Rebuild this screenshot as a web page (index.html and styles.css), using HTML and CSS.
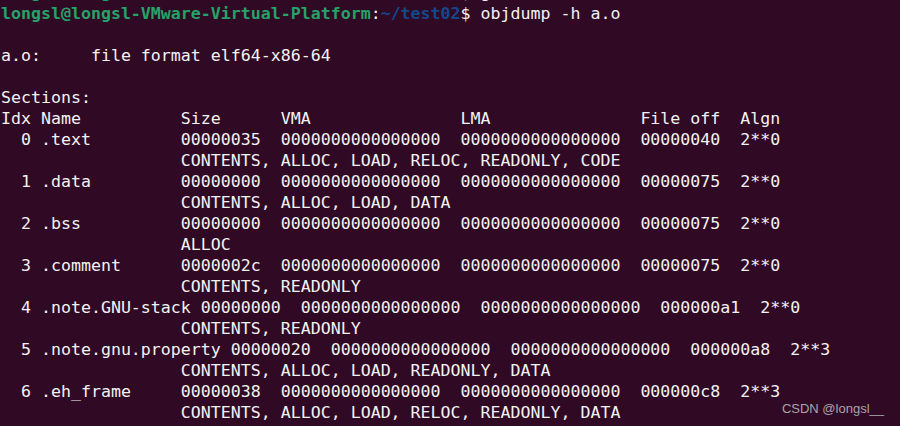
FILE: index.html
```html
<!DOCTYPE html>
<html lang="en">
<head>
<meta charset="utf-8">
<title>objdump -h a.o</title>
<link rel="stylesheet" href="styles.css">
</head>
<body>
<main class="term">
<pre class="out"><span class="user">longsl@longsl-VMware-Virtual-Platform</span>:<span class="path">~/test02</span>$ gcc -c a.c
<span class="user">longsl@longsl-VMware-Virtual-Platform</span>:<span class="path">~/test02</span>$ objdump -h a.o

a.o:     file format elf64-x86-64

Sections:
Idx Name          Size      VMA               LMA               File off  Algn
  0 .text         00000035  0000000000000000  0000000000000000  00000040  2**0
                  CONTENTS, ALLOC, LOAD, RELOC, READONLY, CODE
  1 .data         00000000  0000000000000000  0000000000000000  00000075  2**0
                  CONTENTS, ALLOC, LOAD, DATA
  2 .bss          00000000  0000000000000000  0000000000000000  00000075  2**0
                  ALLOC
  3 .comment      0000002c  0000000000000000  0000000000000000  00000075  2**0
                  CONTENTS, READONLY
  4 .note.GNU-stack 00000000  0000000000000000  0000000000000000  000000a1  2**0
                  CONTENTS, READONLY
  5 .note.gnu.property 00000020  0000000000000000  0000000000000000  000000a8  2**3
                  CONTENTS, ALLOC, LOAD, READONLY, DATA
  6 .eh_frame     00000038  0000000000000000  0000000000000000  000000c8  2**3
                  CONTENTS, ALLOC, LOAD, RELOC, READONLY, DATA
</pre>
<div class="mark">CSDN @longsl__</div>
</main>
</body>
</html>
```

FILE: styles.css
```css
html, body {
  margin: 0;
  padding: 0;
  width: 900px;
  height: 426px;
  overflow: hidden;
  background: #300a24;
}
.term {
  position: relative;
  width: 900px;
  height: 426px;
  overflow: hidden;
  background: #300a24;
}
.out {
  margin: -18px 0 0 0;
  padding: 0 0 0 1px;
  font-family: "DejaVu Sans Mono", monospace;
  font-size: 16.6px;
  line-height: 21px;
  color: #f2f2f2;
  white-space: pre;
}
.user {
  color: #26a269;
  font-weight: bold;
}
.path {
  color: #12488b;
  font-weight: bold;
}
.mark {
  position: absolute;
  right: 16px;
  bottom: 10px;
  font-family: "Liberation Sans", Arial, sans-serif;
  font-size: 13px;
  color: #aba3aa;
}
```
